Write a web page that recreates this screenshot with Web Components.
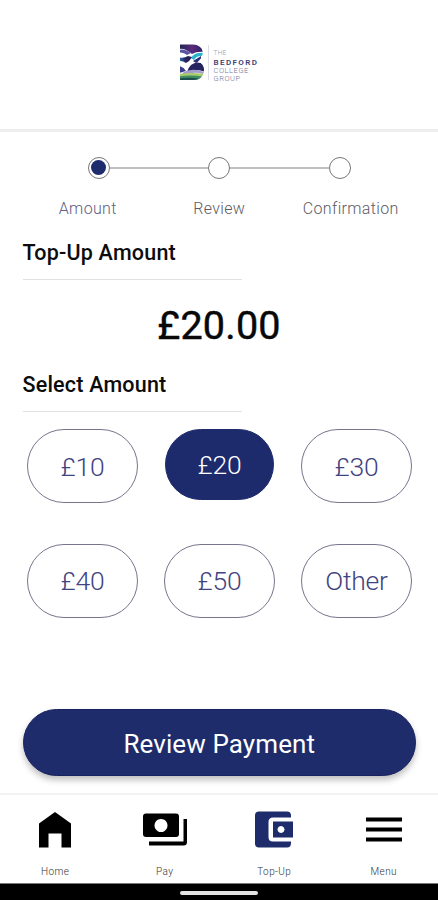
<!DOCTYPE html>
<html lang="en">
<head>
<meta charset="utf-8">
<title>Top-Up</title>
<style>
body{margin:0;background:#fff;font-family:Roboto,"Liberation Sans",sans-serif}
</style>
</head>
<body>
<topup-app></topup-app>
<script>
function define(name, html){
  customElements.define(name, class extends HTMLElement{
    constructor(){
      super();
      const t=document.createElement('template');
      t.innerHTML=html;
      this.attachShadow({mode:'open'}).append(t.content.cloneNode(true));
    }
  });
}

define('college-logo', `<style>
:host{display:flex;align-items:flex-start;width:80px;height:38px}
svg{flex:none;display:block}
.t{margin-left:4.5px;padding-top:7px;font-size:7.5px;line-height:8px;color:#73759a;font-weight:300;display:flex;flex-direction:column;white-space:nowrap}
.t span{letter-spacing:.55px}
.t .s{font-size:6.5px;line-height:7.5px;letter-spacing:.25px;color:#9a9cb4}
.t b{font-weight:600;font-size:8px;line-height:9px;color:#3c3f78;letter-spacing:1.4px}
</style>
<svg width="30" height="38" viewBox="0 0 30 38">
<defs>
<clipPath id="b"><path d="M1 1.500H14Q22 2 23.500 8Q24.500 14 19 18.500Q25.500 21 25 28Q24 37 14 37H1Z"/></clipPath>
<linearGradient id="g"><stop stop-color="#2f76b8"/><stop offset=".45" stop-color="#2a2560"/><stop offset="1" stop-color="#221a55"/></linearGradient>
<linearGradient id="p"><stop stop-color="#1c2750"/><stop offset=".5" stop-color="#5a2a7c"/><stop offset="1" stop-color="#241f60"/></linearGradient>
</defs>
<g clip-path="url(#b)">
<path fill="#fff" d="M0 0H27V38H0z"/>
<path fill="url(#p)" d="M0 0H26V9Q18 8 13 11Q6 5 0 6z"/>
<path fill="#5b54a4" d="M0 7Q6 5 12 10L8 12Q5 9 0 9.500z"/>
<path fill="#2ab4cc" d="M12 15Q15 9 26 10V13Q18 12 15 17z"/>
<path fill="url(#g)" d="M0 14Q4 16 9 13L13 14Q11 18 7 20Q4 18 0 18z"/>
<path fill="#2c2f76" d="M14 18Q19 15 22 13V17L17 20z"/>
<path fill="#25245f" d="M12 22Q18 17 26 22V29Q18 25 8 29Q9 25 12 22z"/>
<path fill="#3b3c87" d="M0 23Q5 24 7 28L0 30z"/>
<path fill="#a29bd0" d="M3 30Q13 24 25 29V31Q14 28 6 32z"/>
<path fill="#a9ca6b" d="M0 31Q13 29 26 31V34H0z"/>
<path fill="#3f8d63" d="M0 33.500Q12 31.500 26 34V38H0z"/>
<path fill="#1f4c4d" d="M0 35.500Q10 34 22 36V38H0z"/>
</g>
<path stroke="#dcdce4" d="M29.500 2v35"/>
</svg>
<div class="t"><span class="s">THE</span><b>BEDFORD</b><span>COLLEGE</span><span>GROUP</span></div>`);

define('app-header', `<style>
:host{display:flex;justify-content:center;box-sizing:border-box;height:132px;padding-top:43px;border-bottom:3px solid #eee}
</style><slot></slot>`);

define('step-dot', `<style>
:host{display:grid;place-items:center;flex:none;box-sizing:border-box;width:22px;height:22px;border:1px solid #77777c;border-radius:50%}
:host([active])::before{content:"";width:15px;height:15px;border-radius:50%;background:#1d2a6b}
</style>`);

define('step-progress', `<style>
:host{display:block;padding-top:24.5px;height:82px}
.track{display:flex;align-items:center;margin:0 87px 0 87.5px}
i{flex:1;height:2px;background:#bfbfbf}
.labels{display:grid;grid-template-columns:131.5px 131.5px 131.5px;margin:20px 0 0 22px;text-align:center;font-size:16px;line-height:20px;font-weight:300;color:#5c5c64}
.labels span{letter-spacing:.35px}
.labels .a{color:#5d6083}
</style>
<div class="track"><step-dot active></step-dot><i></i><step-dot></step-dot><i></i><step-dot></step-dot></div>
<div class="labels"><span class="a">Amount</span><span>Review</span><span>Confirmation</span></div>`);

define('section-title', `<style>
:host{display:block;box-sizing:border-box;height:41.5px;width:219px;margin-left:22.5px;padding-top:.6px;border-bottom:1.5px solid #e2e2e2;font-size:21.5px;line-height:28px;font-weight:500;color:#0c0c0c;white-space:nowrap;letter-spacing:.2px}
</style><slot></slot>`);

define('amount-value', `<style>
:host{display:block;text-align:center;height:90px;padding-top:22px;box-sizing:border-box;font-size:39.5px;line-height:48px;font-weight:400;-webkit-text-stroke:.5px #080808;color:#080808;letter-spacing:.2px}
</style><slot></slot>`);

define('amount-option', `<style>
:host{display:grid;place-items:center;box-sizing:border-box;width:111px;height:74px;padding-top:1px;border:1px solid #77758c;border-radius:37px;font-size:26.5px;line-height:32px;font-weight:300;color:#41437f;letter-spacing:-.2px}
:host([selected]){height:71px;width:109px;margin-left:1px;border-color:#1d2a6b;background:#1d2a6b;color:#fff}
</style><slot></slot>`);

define('amount-grid', `<style>
:host{display:grid;grid-template-columns:repeat(3,111px);grid-auto-rows:74px;gap:40.5px 26px;margin:17.5px 0 0 27px;align-items:start}
</style><slot></slot>`);

define('primary-button', `<style>
:host{display:grid;place-items:center;box-sizing:border-box;margin:91.5px 22px 0 22.5px;height:67px;border-radius:34px;background:#1f2c6c;border:1px solid #17225f;color:#fff;font-size:26px;line-height:32px;padding-top:2px;letter-spacing:.1px;box-shadow:0 4px 6px rgba(0,0,0,.25)}
</style><slot></slot>`);

define('nav-item', `<style>
:host{display:flex;flex-direction:column;align-items:center;font-size:10px;line-height:12px;font-weight:300;color:#333;letter-spacing:.4px}
.i{height:54px;display:flex;align-items:center;justify-content:center;margin-bottom:11.5px}
</style><div class="i"><slot name="icon"></slot></div><span><slot></slot></span>`);

define('bottom-nav', `<style>
:host{display:grid;grid-template-columns:repeat(4,109.5px);box-sizing:border-box;height:90px;border-top:2px solid #f3f3f3;padding:5.5px 0 0 .5px}
svg{display:block}
</style>
<nav-item><svg slot="icon" width="34" height="54" viewBox="0 0 34 54"><path d="M1 22.500 17 11 33 22.500V46.500H23.500V32.500H10.500V46.500H1z"/></svg>Home</nav-item>
<nav-item><svg slot="icon" width="46" height="54" viewBox="0 0 46 54"><path fill-rule="evenodd" d="M4 12.500H34Q37 12.500 37 15.500V33Q37 36 34 36H4Q1 36 1 33V15.500Q1 12.500 4 12.500zM19 18a6.500 6.500 0 1 0 .01 0z"/><path d="M41.500 18H45V41Q45 44.500 41.500 44.500H7V40.500H41.500z"/></svg>Pay</nav-item>
<nav-item><svg slot="icon" width="40" height="54" viewBox="0 0 40 54"><path fill="#1f2c6c" fill-rule="evenodd" d="M5 10.500H33Q37 10.500 37 14.500V16.500H19Q14.500 16.500 14.500 21V36Q14.500 40.500 19 40.500H37V42Q37 46.500 33 46.500H5Q1 46.500 1 42.500V14.500Q1 10.500 5 10.500zM19 20.500H39V36.500H19zM27 25a3.500 3.500 0 1 0 .01 0z"/></svg>Top-Up</nav-item>
<nav-item><svg slot="icon" width="36" height="54" viewBox="0 0 36 54"><path d="M0 16.500H36V20.500H0zM0 26.500H36V30.500H0zM0 36.500H36V40.500H0z"/></svg>Menu</nav-item>`);

define('system-bar', `<style>
:host{display:flex;justify-content:center;box-sizing:border-box;height:17px;padding-top:7px;background:#000;border-top:1px solid #777}
i{width:78px;height:4px;border-radius:2px;background:#e4e4e4}
</style><i></i>`);

define('topup-app', `<style>
:host{display:flex;flex-direction:column;width:438px;height:900px;overflow:hidden;background:#fff}
.fill{flex:1}
</style>
<app-header><college-logo></college-logo></app-header>
<step-progress></step-progress>
<section-title>Top-Up Amount</section-title>
<amount-value>£20.00</amount-value>
<section-title>Select Amount</section-title>
<amount-grid>
<amount-option>£10</amount-option><amount-option selected>£20</amount-option><amount-option>£30</amount-option>
<amount-option>£40</amount-option><amount-option>£50</amount-option><amount-option>Other</amount-option>
</amount-grid>
<primary-button>Review Payment</primary-button>
<div class="fill"></div>
<bottom-nav></bottom-nav>
<system-bar></system-bar>`);
</script>
</body>
</html>
